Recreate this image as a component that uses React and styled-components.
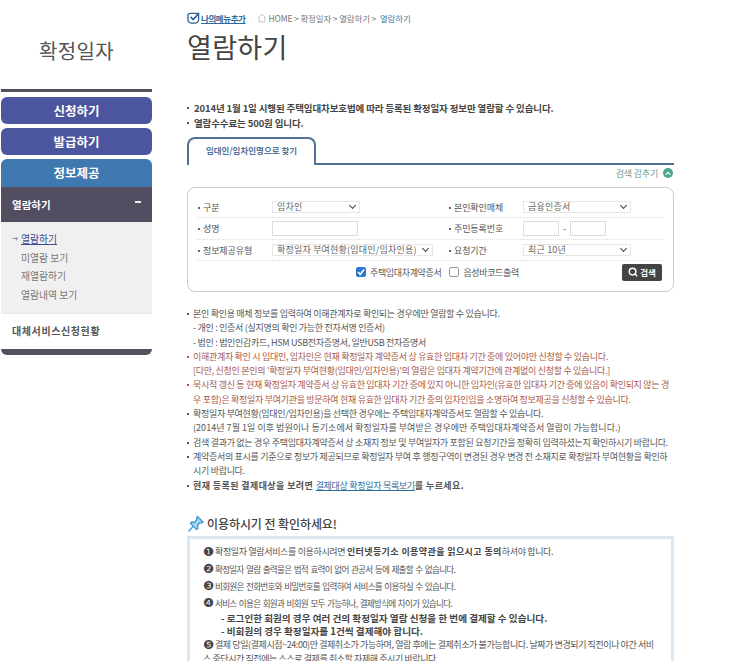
import styled, { createGlobalStyle } from "styled-components";
import { Search } from "lucide-react";

const GlobalStyle = createGlobalStyle`
  html, body {
    margin: 0;
    padding: 0;
    background: #fff;
    overflow: hidden;
  }
  body {
    font-family: "Noto Sans CJK KR", "Noto Sans", sans-serif;
    color: #444;
  }
  * {
    box-sizing: border-box;
  }
`;

const App = () => {
  return (
    <Page>
      <GlobalStyle />
      <Sidebar>
        <SideTitle>확정일자</SideTitle>
        <TopBar />
        <MenuButton>신청하기</MenuButton>
        <MenuButton>발급하기</MenuButton>
        <MenuButton $current>정보제공</MenuButton>
        <SubHead>
          <span>열람하기</span>
          <Minus />
        </SubHead>
        <SubList>
          <SubItem $active>열람하기</SubItem>
          <SubItem>미열람 보기</SubItem>
          <SubItem>재열람하기</SubItem>
          <SubItem>열람내역 보기</SubItem>
        </SubList>
        <ExtraRow>대체서비스신청현황</ExtraRow>
        <BottomBar />
      </Sidebar>

      <Main>
        <Crumbs>
          <MyMenu>
            <svg width="13" height="12" viewBox="0 0 14 13">
              <path d="M3 1.500h8a1.500 1.500 0 0 1 1.500 1.500v5.500a3.500 3.500 0 0 1-3.500 3.500H4.500a3.500 3.500 0 0 1-3.500-3.500V3.500a2 2 0 0 1 2-2z" fill="none" stroke="#2c5f94" strokeWidth="1.400" />
              <path d="M3.800 5.200l2.800 3 6.400-7" fill="none" stroke="#2c5f94" strokeWidth="1.800" />
            </svg>
            <u>나의메뉴추가</u>
          </MyMenu>
          <Path>
            <svg width="10" height="10" viewBox="0 0 14 13">
              <path d="M1 7l6-6 6 6M3 6v6h8V6" fill="none" stroke="#bbb" strokeWidth="1.200" />
            </svg>
            HOME &gt; 확정일자 &gt; 열람하기 &gt; <PathNow>열람하기</PathNow>
          </Path>
        </Crumbs>
        <PageTitle>열람하기</PageTitle>

        <Intro>
          <IntroLine>2014년 1월 1일 시행된 주택임대차보호법에 따라 등록된 확정일자 정보만 열람할 수 있습니다.</IntroLine>
          <IntroLine>열람수수료는 500원 입니다.</IntroLine>
        </Intro>

        <TabRow>
          <Tab>임대인/임차인명으로 찾기</Tab>
        </TabRow>
        <HideRow>
          검색 감추기
          <HideDot>
            <svg width="6" height="5" viewBox="0 0 8 6">
              <path d="M1 4.500l3-3 3 3" fill="none" stroke="#fff" strokeWidth="1.600" />
            </svg>
          </HideDot>
        </HideRow>

        <SearchBox>
          <FormGrid>
            <FieldLabel>구분</FieldLabel>
            <FieldCell><FakeSelect $w={88}>임차인</FakeSelect></FieldCell>
            <FieldLabel>본인확인매체</FieldLabel>
            <FieldCell><FakeSelect $w={108}>금융인증서</FakeSelect></FieldCell>

            <FieldLabel $tall>성명</FieldLabel>
            <FieldCell $tall><TextBox $w={86} /></FieldCell>
            <FieldLabel $tall>주민등록번호</FieldLabel>
            <FieldCell $tall>
              <TextBox $w={36} />
              <Dash>-</Dash>
              <TextBox $w={36} />
            </FieldCell>

            <FieldLabel>정보제공유형</FieldLabel>
            <FieldCell><FakeSelect $w={161}>확정일자 부여현황(임대인/임차인용)</FakeSelect></FieldCell>
            <FieldLabel>요청기간</FieldLabel>
            <FieldCell><FakeSelect $w={108}>최근 10년</FakeSelect></FieldCell>
          </FormGrid>
          <CheckRow>
            <CheckLabel>
              <CheckBox $on>
                <svg width="8" height="8" viewBox="0 0 8 8">
                  <path d="M1 4l2.200 2.400L7 1.500" fill="none" stroke="#fff" strokeWidth="1.600" />
                </svg>
              </CheckBox>
              주택임대차계약증서
            </CheckLabel>
            <CheckLabel>
              <CheckBox />
              음성바코드출력
            </CheckLabel>
            <SearchButton>
              <Search size={10} strokeWidth={3.5} />
              검색
            </SearchButton>
          </CheckRow>
        </SearchBox>

        <Notes>
          <Note>본인 확인용 매체 정보를 입력하여 이해관계자로 확인되는 경우에만 열람할 수 있습니다.</Note>
          <NoteSub>- 개인 : 인증서 (실지명의 확인 가능한 전자서명 인증서)</NoteSub>
          <NoteSub>- 법인 : 법인인감카드, HSM USB전자증명서, 일반USB 전자증명서</NoteSub>
          <Note $red>이해관계자 확인 시 임대인, 임차인은 현재 확정일자 계약증서 상 유효한 임대차 기간 중에 있어야만 신청할 수 있습니다.</Note>
          <NoteSub $red>[다만, 신청인 본인의 '확정일자 부여현황(임대인/임차인용)'의 열람은 임대차 계약기간에 관계없이 신청할 수 있습니다.]</NoteSub>
          <Note $red>묵시적 갱신 등 현재 확정일자 계약증서 상 유효한 임대차 기간 중에 있지 아니한 임차인(유효한 임대차 기간 중에 있음이 확인되지 않는 경우 포함)은 확정일자 부여기관을 방문하여 현재 유효한 임대차 기간 중의 임차인임을 소명하여 정보제공을 신청할 수 있습니다.</Note>
          <Note>확정일자 부여현황(임대인/임차인용)을 선택한 경우에는 주택임대차계약증서도 열람할 수 있습니다.</Note>
          <NoteSub $wide>(2014년 7월 1일 이후 법원이나 등기소에서 확정일자를 부여받은 경우에만 주택임대차계약증서 열람이 가능합니다.)</NoteSub>
          <Note>검색 결과가 없는 경우 주택임대차계약증서 상 소재지 정보 및 부여일자가 포함된 요청기간을 정확히 입력하셨는지 확인하시기 바랍니다.</Note>
          <Note>계약증서의 표시를 기준으로 정보가 제공되므로 확정일자 부여 후 행정구역이 변경된 경우 변경 전 소재지로 확정일자 부여현황을 확인하시기 바랍니다.</Note>
          <Note $bold>현재 등록된 결제대상을 보려면 <NoteLink>결제대상 확정일자 목록보기</NoteLink>를 누르세요.</Note>
        </Notes>

        <CheckHead>
          <svg width="17" height="18" viewBox="0 0 17 18">
            <path d="M6 11.500L1.500 16.500" fill="none" stroke="#4a9ed8" strokeWidth="1.400" />
            <path d="M10.500 1.500L16 7l-1.500 1-1.500-.5-2.500 3 .5 3-1.500 1-6-6 1-1.500 3 .5 2.500-3-.5-1.500z" fill="#a9d8f2" stroke="#3f97d3" strokeWidth="1.300" />
          </svg>
          이용하시기 전 확인하세요!
        </CheckHead>
        <Panel>
          <CheckItem $ls={-0.35}><Num>❶</Num>확정일자 열람서비스를 이용하시려면 <b>인터넷등기소 이용약관을 읽으시고 동의</b>하셔야 합니다.</CheckItem>
          <CheckItem $ls={-0.75} $size={8.6}><Num>❷</Num>확정일자 열람 출력물은 법적 효력이 없어 관공서 등에 제출할 수 없습니다.</CheckItem>
          <CheckItem $ls={-0.75} $size={8.6}><Num>❸</Num>비회원은 전화번호와 비밀번호를 입력하여 서비스를 이용하실 수 있습니다.</CheckItem>
          <CheckItem $ls={-0.75} $size={8.6} $gap={2}><Num>❹</Num>서비스 이용은 회원과 비회원 모두 가능하나, 결제방식에 차이가 있습니다.</CheckItem>
          <CheckStrong>- 로그인한 회원의 경우 여러 건의 확정일자 열람 신청을 한 번에 결제할 수 있습니다.</CheckStrong>
          <CheckStrong>- 비회원의 경우 확정일자를 1건씩 결제해야 합니다.</CheckStrong>
          <CheckItem $ls={-0.42} $gap={0}><Num>❺</Num>결제 당일(결제시점~24:00)만 결제취소가 가능하며, 열람 후에는 결제취소가 불가능합니다. 날짜가 변경되기 직전이나 야간 서비스 중단시간 직전에는 스스로 결제를 취소할 자제해 주시기 바랍니다.</CheckItem>
        </Panel>
      </Main>
    </Page>
  );
};

const Page = styled.div`
  display: flex;
  width: 743px;
  height: 661px;
  overflow: hidden;
  background: #fff;
`;
const Sidebar = styled.aside`
  width: 151px;
  margin-left: 1px;
  flex-shrink: 0;
`;
const SideTitle = styled.div`
  height: 89px;
  padding-top: 37px;
  text-align: center;
  font-size: 20px;
  line-height: 28px;
  letter-spacing: 0.3px;
  color: #555;
`;
const TopBar = styled.div`
  height: 3px;
  margin-bottom: 5px;
  background: #55505f;
`;
const MenuButton = styled.div`
  height: ${(props) => (props.$current ? "28px" : "27px")};
  margin-bottom: ${(props) => (props.$current ? "0" : "4px")};
  border-radius: ${(props) => (props.$current ? "6px 6px 0 0" : "6px")};
  background: ${(props) => (props.$current ? "#3f79af" : "#4c569f")};
  color: #fff;
  text-align: center;
  font-size: 12.5px;
  font-weight: 700;
  line-height: 27px;
`;
const SubHead = styled.div`
  display: flex;
  align-items: center;
  justify-content: space-between;
  height: 35px;
  padding: 0 11px;
  background: #524d60;
  color: #fff;
  font-size: 10.500px;
  font-weight: 700;
`;
const Minus = styled.i`
  width: 6px;
  height: 2px;
  margin-top: -5px;
  background: #eee;
`;
const SubList = styled.div`
  height: 92px;
  padding-top: 8px;
  background: #f0f0f0;
  border-bottom: 1px solid #e8e8e8;
`;
const SubItem = styled.div`
  position: relative;
  padding-left: 20px;
  font-size: 9.800px;
  line-height: 18.700px;
  color: ${(props) => (props.$active ? "#3f4a8f" : "#777")};
  text-decoration: ${(props) => (props.$active ? "underline" : "none")};
  &::before {
    content: ${(props) => (props.$active ? '"→"' : "none")};
    position: absolute;
    left: 11px;
    font-size: 6px;
    color: #3f4a8f;
  }
`;
const ExtraRow = styled.div`
  height: 35px;
  padding-left: 11px;
  font-size: 10px;
  font-weight: 700;
  line-height: 34px;
  letter-spacing: 0.600px;
  color: #555;
`;
const BottomBar = styled.div`
  height: 6px;
  background: #55505f;
  border-radius: 0 0 6px 6px;
`;
const Main = styled.main`
  width: 487px;
  margin-left: 35px;
  flex-shrink: 0;
`;
const Crumbs = styled.div`
  display: flex;
  align-items: center;
  gap: 11px;
  height: 13px;
  margin-top: 11px;
`;
const MyMenu = styled.div`
  display: flex;
  align-items: center;
  gap: 1px;
  font-size: 8.500px;
  font-weight: 700;
  letter-spacing: -0.4px;
  color: #2c6a9e;
`;
const Path = styled.div`
  display: flex;
  align-items: center;
  gap: 2px;
  font-size: 8.500px;
  letter-spacing: -0.150px;
  color: #777;
  white-space: pre;
`;
const PathNow = styled.span`
  color: #3f7fa8;
`;
const PageTitle = styled.h1`
  margin: 6px 0 0;
  height: 34px;
  font-size: 27px;
  font-weight: 400;
  line-height: 34px;
  letter-spacing: 0.300px;
  color: #444;
`;
const Intro = styled.div`
  margin-top: 37px;
`;
const IntroLine = styled.div`
  position: relative;
  padding-left: 7px;
  font-size: 9.500px;
  font-weight: 700;
  line-height: 14.500px;
  letter-spacing: -0.130px;
  color: #444;
  &::before {
    content: "";
    position: absolute;
    left: 0;
    top: 6px;
    width: 2px;
    height: 2px;
    background: #555;
  }
`;
const TabRow = styled.div`
  height: 28px;
  margin-top: 7px;
  border-bottom: 2px solid #54719a;
`;
const Tab = styled.div`
  width: 129px;
  height: 28px;
  border: 2px solid #54719a;
  border-bottom: 0;
  border-radius: 8px 8px 0 0;
  background: #fff;
  text-align: center;
  font-size: 8.500px;
  font-weight: 700;
  line-height: 23px;
  color: #54719a;
`;
const HideRow = styled.div`
  display: flex;
  align-items: center;
  justify-content: flex-end;
  gap: 5px;
  height: 16px;
  padding-right: 1px;
  font-size: 9px;
  letter-spacing: -0.2px;
  color: #6f9a90;
`;
const HideDot = styled.span`
  display: flex;
  align-items: center;
  justify-content: center;
  width: 10px;
  height: 10px;
  border-radius: 50%;
  background: #4aa88f;
`;
const SearchBox = styled.section`
  height: 105px;
  margin-top: 6px;
  padding: 9px 9px 0;
  border: 1px solid #ccc;
  border-radius: 8px;
`;
const FormGrid = styled.div`
  display: grid;
  grid-template-columns: 75px 176px 75px 1fr;
`;
const FieldLabel = styled.div`
  position: relative;
  display: flex;
  align-items: center;
  height: ${(props) => (props.$tall ? "22px" : "21px")};
  padding-left: 6px;
  border-bottom: 1px dotted #ddd;
  font-size: 9px;
  letter-spacing: -0.1px;
  color: #555;
  &::before {
    content: "";
    position: absolute;
    left: 1px;
    top: 10px;
    width: 2px;
    height: 2px;
    background: #666;
  }
`;
const FieldCell = styled.div`
  display: flex;
  align-items: center;
  gap: 4px;
  height: ${(props) => (props.$tall ? "22px" : "21px")};
  border-bottom: 1px dotted #ddd;
`;
const FakeSelect = styled.div`
  position: relative;
  width: ${(props) => props.$w}px;
  height: 12px;
  padding-left: 4px;
  border: 1px solid #e6e6e6;
  font-size: 9px;
  line-height: 10px;
  letter-spacing: 0.2px;
  white-space: nowrap;
  color: #666;
  overflow: hidden;
  &::after {
    content: "";
    position: absolute;
    right: 4px;
    top: 1px;
    width: 4px;
    height: 4px;
    border-right: 1.5px solid #444;
    border-bottom: 1.5px solid #444;
    transform: rotate(45deg);
    background: #fff;
  }
`;
const TextBox = styled.div`
  width: ${(props) => props.$w}px;
  height: 15px;
  border: 1px solid #ddd;
`;
const Dash = styled.span`
  font-size: 9px;
  color: #666;
`;
const CheckRow = styled.div`
  display: flex;
  align-items: center;
  height: 22px;
  padding: 0 2px 0 159px;
`;
const CheckLabel = styled.div`
  display: flex;
  align-items: center;
  gap: 4px;
  margin-right: 8px;
  font-size: 9px;
  letter-spacing: -0.350px;
  color: #555;
`;
const CheckBox = styled.span`
  display: flex;
  align-items: center;
  justify-content: center;
  width: 10px;
  height: 10px;
  border-radius: 2px;
  border: 1px solid ${(props) => (props.$on ? "#2a78d0" : "#999")};
  background: ${(props) => (props.$on ? "#2a78d0" : "#fff")};
`;
const SearchButton = styled.div`
  display: flex;
  align-items: center;
  justify-content: center;
  gap: 2px;
  width: 40px;
  height: 17px;
  margin-left: auto;
  border-radius: 2px;
  background: #444;
  color: #fff;
  font-size: 8.500px;
  font-weight: 700;
`;
const Notes = styled.div`
  margin-top: 15px;
`;
const Note = styled.div`
  position: relative;
  padding-left: 6px;
  font-size: 9px;
  line-height: 14.300px;
  letter-spacing: ${(props) => (props.$bold ? "0.400px" : "-0.300px")};
  color: ${(props) => (props.$red ? "#a9584a" : "#555")};
  font-weight: ${(props) => (props.$bold ? 700 : 400)};
  &::before {
    content: "";
    position: absolute;
    left: 0;
    top: 6px;
    width: 2px;
    height: 2px;
    background: currentColor;
  }
`;
const NoteSub = styled.div`
  padding-left: 6px;
  font-size: 9px;
  line-height: 14.300px;
  letter-spacing: ${(props) => (props.$wide ? "0.040px" : "-0.300px")};
  color: ${(props) => (props.$red ? "#a9584a" : "#555")};
`;
const NoteLink = styled.span`
  color: #2f6d9e;
  font-weight: 400;
  letter-spacing: -0.300px;
  text-decoration: underline;
`;
const CheckHead = styled.h2`
  display: flex;
  align-items: center;
  gap: 3px;
  height: 20px;
  margin: 21px 0 0;
  font-size: 12px;
  font-weight: 500;
  letter-spacing: -0.080px;
  color: #444;
`;
const Panel = styled.section`
  margin-top: 2px;
  padding: 6px 12px 10px 13px;
  border: 3px solid #d9e8f3;
  font-size: 9px;
  color: #555;
`;
const CheckItem = styled.div`
  line-height: 14px;
  margin-bottom: ${(props) => props.$gap ?? 3}px;
  font-size: ${(props) => props.$size ?? 9}px;
  letter-spacing: ${(props) => props.$ls}px;
  word-spacing: ${(props) => (props.$size ? "1.200px" : "0")};
  b {
    font-weight: 700;
    letter-spacing: 0.400px;
    color: #444;
  }
`;
const Num = styled.span`
  display: inline-block;
  width: 12px;
  height: 14px;
  vertical-align: top;
  font-size: 12.500px;
  line-height: 14px;
  letter-spacing: 0;
  font-family: "DejaVu Sans", sans-serif;
  overflow: hidden;
  color: #444;
`;
const CheckStrong = styled.div`
  padding-left: 18px;
  font-size: 9.600px;
  font-weight: 700;
  line-height: 13px;
  color: #444;
`;

export default App;
